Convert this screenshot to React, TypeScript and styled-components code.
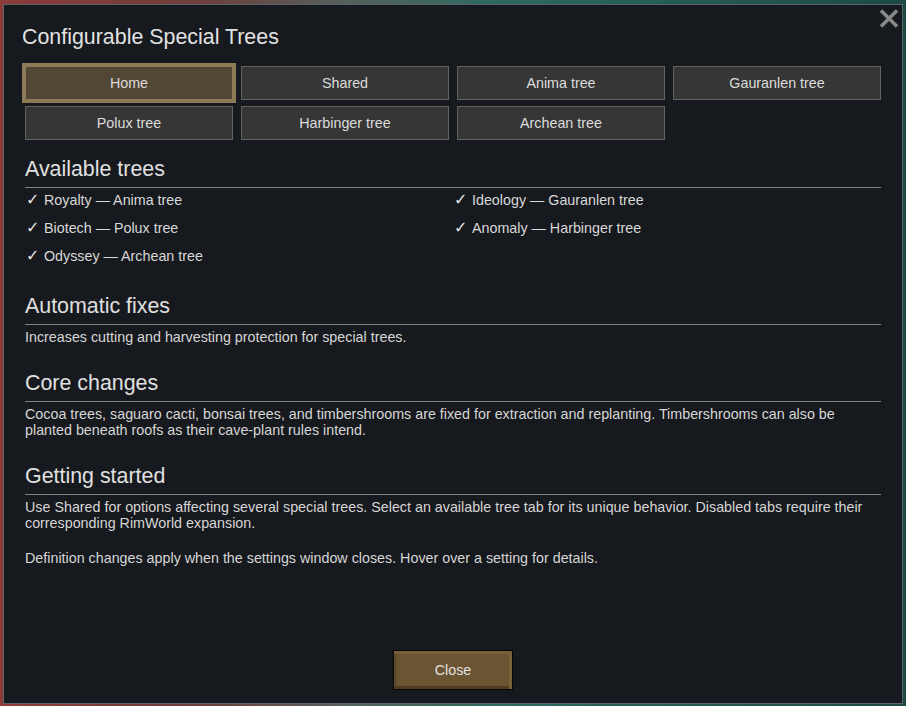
import styled, { createGlobalStyle } from "styled-components";

const GlobalStyle = createGlobalStyle`
  html, body {
    margin: 0;
    padding: 0;
    width: 906px;
    height: 706px;
    overflow: hidden;
    background: linear-gradient(90deg, #8e3b38 0%, #6e3e3b 22%, #55605c 38%, #2c6a5e 55%, #1d4a43 100%);
    font-family: "Liberation Sans", Arial, "DejaVu Sans", sans-serif;
  }
`;

const TEXT_SIZE = "14.3px";
const HEAD_SIZE = "21.4px";

const TABS = [
  "Home",
  "Shared",
  "Anima tree",
  "Gauranlen tree",
  "Polux tree",
  "Harbinger tree",
  "Archean tree",
];

const AVAILABLE = [
  "Royalty — Anima tree",
  "Ideology — Gauranlen tree",
  "Biotech — Polux tree",
  "Anomaly — Harbinger tree",
  "Odyssey — Archean tree",
];

const Screen = styled.div`
  width: 906px;
  height: 706px;
  padding: 4px 0 0 3px;
  box-sizing: border-box;
`;

const Window = styled.div`
  position: relative;
  width: 900px;
  height: 700px;
  box-sizing: border-box;
  background: #16191d;
  border: 1px solid #5a626b;
  padding: 20px 21px 13px 21px;
  display: flex;
  flex-direction: column;
  color: #d8d8d8;
`;

const CloseX = styled.button`
  position: absolute;
  top: 2px;
  right: 2px;
  width: 22px;
  height: 22px;
  padding: 0;
  border: 0;
  background: none;
  display: flex;
  align-items: center;
  justify-content: center;
`;

const Title = styled.h1`
  margin: 0 0 17px -3px;
  font-size: ${HEAD_SIZE};
  line-height: 24px;
  font-weight: 400;
  color: #e2e2e2;
`;

const TabGrid = styled.div`
  display: grid;
  grid-template-columns: repeat(4, 1fr);
  grid-auto-rows: 34px;
  column-gap: 8px;
  row-gap: 6px;
`;

const Tab = styled.div<{ $active?: boolean }>`
  box-sizing: border-box;
  display: flex;
  align-items: center;
  justify-content: center;
  font-size: ${TEXT_SIZE};
  color: #dcdcdc;
  background: ${(p) => (p.$active ? "#524634" : "#363636")};
  border: 1px solid ${(p) => (p.$active ? "#8d7a57" : "#626262")};
  box-shadow: ${(p) => (p.$active ? "0 0 0 3px #8d7a57" : "none")};
`;

const Content = styled.div`
  flex: 1;
  display: flex;
  flex-direction: column;
  gap: 26px;
  margin-top: 17px;
`;

const Section = styled.section`
  display: flex;
  flex-direction: column;
`;

const Heading = styled.h2`
  margin: 0;
  font-size: ${HEAD_SIZE};
  line-height: 24px;
  font-weight: 400;
  color: #e0e0e0;
  padding-bottom: 6px;
  border-bottom: 1px solid #7d8186;
`;

const TreeList = styled.div`
  display: grid;
  grid-template-columns: 1fr 1fr;
  row-gap: 12px;
  margin-top: 4px;
  padding-bottom: 4px;
`;

const TreeItem = styled.div`
  display: flex;
  align-items: baseline;
  font-size: ${TEXT_SIZE};
  line-height: 16px;
  color: #d8d8d8;
`;

const Check = styled.span`
  display: inline-block;
  width: 18px;
  padding-left: 1px;
  font-family: "DejaVu Sans", sans-serif;
  font-size: 16px;
  color: #e4e4e4;
`;

const Body = styled.p<{ $gap?: number }>`
  margin: ${(p) => p.$gap ?? 4}px 0 0 0;
  font-size: ${TEXT_SIZE};
  line-height: 16px;
  color: #d6d6d6;
`;

const Footer = styled.div`
  display: flex;
  justify-content: center;
`;

const CloseButton = styled.button`
  width: 120px;
  height: 40px;
  box-sizing: border-box;
  border: 1px solid #050505;
  background: #6a5431;
  box-shadow:
    inset 0 3px 0 #785f36,
    inset -3px 0 0 #7a6238,
    inset 0 -3px 0 #4e3d23,
    inset 3px 0 0 #5f4b2b;
  color: #e2e2e2;
  font-family: "Liberation Sans", Arial, sans-serif;
  font-size: ${TEXT_SIZE};
  padding: 0;
`;

export default function App() {
  return (
    <>
      <GlobalStyle />
      <Screen>
        <Window>
          <CloseX aria-label="Close">
            <svg width="20" height="19" viewBox="0 0 20 19">
              <path
                d="M2 1.5 L18 17.5 M18 1.5 L2 17.5"
                stroke="#888888"
                strokeWidth="3.6"
              />
            </svg>
          </CloseX>
          <Title>Configurable Special Trees</Title>
          <TabGrid>
            {TABS.map((t, i) => (
              <Tab key={t} $active={i === 0}>
                {t}
              </Tab>
            ))}
          </TabGrid>

          <Content>
            <Section>
              <Heading>Available trees</Heading>
              <TreeList>
                {AVAILABLE.map((a) => (
                  <TreeItem key={a}>
                    <Check>✓</Check>
                    {a}
                  </TreeItem>
                ))}
              </TreeList>
            </Section>

            <Section>
              <Heading>Automatic fixes</Heading>
              <Body>
                Increases cutting and harvesting protection for special trees.
              </Body>
            </Section>

            <Section>
              <Heading>Core changes</Heading>
              <Body>
                Cocoa trees, saguaro cacti, bonsai trees, and timbershrooms are
                fixed for extraction and replanting. Timbershrooms can also be
                planted beneath roofs as their cave-plant rules intend.
              </Body>
            </Section>

            <Section>
              <Heading>Getting started</Heading>
              <Body>
                Use Shared for options affecting several special trees. Select
                an available tree tab for its unique behavior. Disabled tabs
                require their corresponding RimWorld expansion.
              </Body>
              <Body $gap={19}>
                Definition changes apply when the settings window closes. Hover
                over a setting for details.
              </Body>
            </Section>
          </Content>

          <Footer>
            <CloseButton>Close</CloseButton>
          </Footer>
        </Window>
      </Screen>
    </>
  );
}
